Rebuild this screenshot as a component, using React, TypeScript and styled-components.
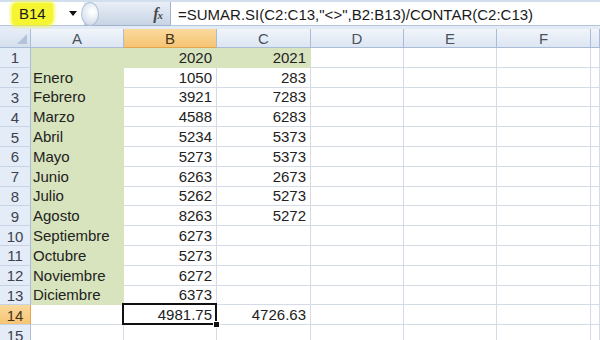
import styled, { createGlobalStyle, css } from "styled-components";

const gridLine = "#d3dbe7";
const headerLine = "#a9bdd6";
const fillGreen = "#d8e4bd";

const GlobalStyle = createGlobalStyle`
  html, body {
    margin: 0;
    padding: 0;
    background: #ffffff;
    overflow: hidden;
  }
  body {
    font-family: "Liberation Sans", Arial, sans-serif;
    color: #1e1e1e;
  }
`;

const Window = styled.div`
  width: 600px;
  height: 340px;
  overflow: hidden;
  background: #ffffff;
`;

const FormulaBar = styled.div`
  display: flex;
  height: 29px;
  box-sizing: border-box;
  padding: 2px 0 3px 0;
  background: linear-gradient(#cfdcec, #e3ebf6 20%, #e3ebf6);
`;

const NameBox = styled.div`
  width: 84px;
  display: flex;
  align-items: center;
  justify-content: space-between;
  box-sizing: border-box;
  padding: 0 7px 0 12px;
  background: #ffffff;
  border-bottom: 1px solid #b6c6da;
`;

const Highlight = styled.span`
  display: inline-block;
  padding: 2px 7px 3px 7px;
  margin-top: 1px;
  font-size: 15px;
  color: #1a1a1a;
  background: #f5f532;
  border-radius: 5px 3px 6px 4px;
  box-shadow: 0 0 3px 2px rgba(245, 245, 50, 0.7);
`;

const FxArea = styled.div`
  width: 86px;
  display: flex;
  align-items: center;
  justify-content: space-between;
  box-sizing: border-box;
  padding-right: 8px;
  background: linear-gradient(#e9eff7, #c7d4e5);
  border-bottom: 1px solid #9fb3cb;
`;

const Knob = styled.div`
  width: 16px;
  height: 22px;
  margin-left: -3px;
  border-radius: 50%;
  background: radial-gradient(circle at 65% 40%, #ffffff 8%, #eaf0f7 40%, #c3d0e1 100%);
  border: 1px solid #b2c2d6;
`;

const FxLabel = styled.span`
  font-family: "Liberation Serif", "Times New Roman", serif;
  font-style: italic;
  font-weight: bold;
  font-size: 16px;
  color: #4a4a4a;
  letter-spacing: -1px;
  small {
    font-size: 11px;
  }
`;

const FormulaInput = styled.div`
  flex: 1;
  display: flex;
  align-items: center;
  box-sizing: border-box;
  padding-left: 7px;
  padding-top: 1px;
  background: #ffffff;
  border-left: 1px solid #9fb3cb;
  border-bottom: 1px solid #b6c6da;
  font-size: 15px;
  color: #1a1a1a;
  white-space: nowrap;
`;

const Sheet = styled.div`
  display: grid;
  grid-template-columns: 31px 93px 93px 94px 93px 93px 94px 1fr;
  grid-template-rows: 19px;
  grid-auto-rows: 19.8px;
`;

const Corner = styled.div`
  display: flex;
  align-items: flex-end;
  justify-content: flex-end;
  padding: 0 3px 3px 0;
  background: linear-gradient(#e6edf7, #d5e0ee);
  border-right: 1px solid ${headerLine};
  border-bottom: 1px solid ${headerLine};
`;

const ColHeader = styled.div<{ $selected?: boolean }>`
  display: flex;
  align-items: center;
  justify-content: center;
  font-size: 15px;
  color: #4a525e;
  border-right: 1px solid ${headerLine};
  border-bottom: 1px solid ${headerLine};
  background: linear-gradient(#f1f5fb, #dde6f2);
  ${(p) =>
    p.$selected &&
    css`
      background: linear-gradient(#fad99c, #f6c474);
      border-bottom-color: #e2a64e;
      color: #3d3320;
    `}
`;

const RowHeader = styled.div<{ $selected?: boolean }>`
  display: flex;
  align-items: center;
  justify-content: center;
  font-size: 15px;
  color: #3b4250;
  padding-top: 1px;
  border-right: 1px solid ${headerLine};
  border-bottom: 1px solid #c5d3e4;
  background: #e4ecf7;
  ${(p) =>
    p.$selected &&
    css`
      background: linear-gradient(#fad99c, #f6c474);
      border-right-color: #e2a64e;
      color: #3d3320;
    `}
`;

const Cell = styled.div<{ $num?: boolean; $fill?: boolean; $active?: boolean }>`
  position: relative;
  display: flex;
  align-items: flex-end;
  justify-content: ${(p) => (p.$num ? "flex-end" : "flex-start")};
  padding: 0 ${(p) => (p.$num ? "4px" : "0")} 1px ${(p) => (p.$num ? "0" : "2px")};
  font-size: 15px;
  line-height: 17px;
  color: #222;
  white-space: nowrap;
  border-right: 1px solid ${(p) => (p.$fill ? fillGreen : gridLine)};
  border-bottom: 1px solid ${(p) => (p.$fill ? fillGreen : gridLine)};
  background: ${(p) => (p.$fill ? fillGreen : "#ffffff")};
  ${(p) =>
    p.$active &&
    css`
      &::after {
        content: "";
        position: absolute;
        left: -2px;
        top: -2px;
        right: -1px;
        bottom: -1px;
        border: 2px solid #111;
        pointer-events: none;
      }
      &::before {
        content: "";
        position: absolute;
        right: -4px;
        bottom: -4px;
        width: 5px;
        height: 5px;
        background: #111;
        border: 1px solid #fff;
        z-index: 2;
      }
    `}
`;

const columns = ["A", "B", "C", "D", "E", "F", ""];

type Row = { a: string; b: string; c: string };

const rows: Row[] = [
  { a: "", b: "2020", c: "2021" },
  { a: "Enero", b: "1050", c: "283" },
  { a: "Febrero", b: "3921", c: "7283" },
  { a: "Marzo", b: "4588", c: "6283" },
  { a: "Abril", b: "5234", c: "5373" },
  { a: "Mayo", b: "5273", c: "5373" },
  { a: "Junio", b: "6263", c: "2673" },
  { a: "Julio", b: "5262", c: "5273" },
  { a: "Agosto", b: "8263", c: "5272" },
  { a: "Septiembre", b: "6273", c: "" },
  { a: "Octubre", b: "5273", c: "" },
  { a: "Noviembre", b: "6272", c: "" },
  { a: "Diciembre", b: "6373", c: "" },
  { a: "", b: "4981.75", c: "4726.63" },
  { a: "", b: "", c: "" },
];

function App() {
  return (
    <Window>
      <GlobalStyle />
      <FormulaBar>
        <NameBox>
          <Highlight>B14</Highlight>
          <svg width="8" height="5" viewBox="0 0 8 5">
            <path d="M0 0 L8 0 L4 5 Z" fill="#111" />
          </svg>
        </NameBox>
        <FxArea>
          <Knob />
          <FxLabel>
            f<small>x</small>
          </FxLabel>
        </FxArea>
        <FormulaInput>=SUMAR.SI(C2:C13,"&lt;&gt;",B2:B13)/CONTAR(C2:C13)</FormulaInput>
      </FormulaBar>

      <Sheet>
        <Corner>
          <svg width="10" height="10" viewBox="0 0 10 10">
            <path d="M10 0 L10 10 L0 10 Z" fill="#b3c4da" />
          </svg>
        </Corner>
        {columns.map((c, i) => (
          <ColHeader key={i} $selected={c === "B"}>
            {c}
          </ColHeader>
        ))}

        {rows.map((r, i) => {
          const n = i + 1;
          return [
            <RowHeader key={`h${n}`} $selected={n === 14}>
              {n}
            </RowHeader>,
            <Cell key={`a${n}`} $fill={n <= 13}>
              {r.a}
            </Cell>,
            <Cell key={`b${n}`} $num $fill={n === 1} $active={n === 14}>
              {r.b}
            </Cell>,
            <Cell key={`c${n}`} $num $fill={n === 1}>
              {r.c}
            </Cell>,
            <Cell key={`d${n}`} />,
            <Cell key={`e${n}`} />,
            <Cell key={`f${n}`} />,
            <Cell key={`g${n}`} />,
          ];
        })}
      </Sheet>
    </Window>
  );
}

export default App;
